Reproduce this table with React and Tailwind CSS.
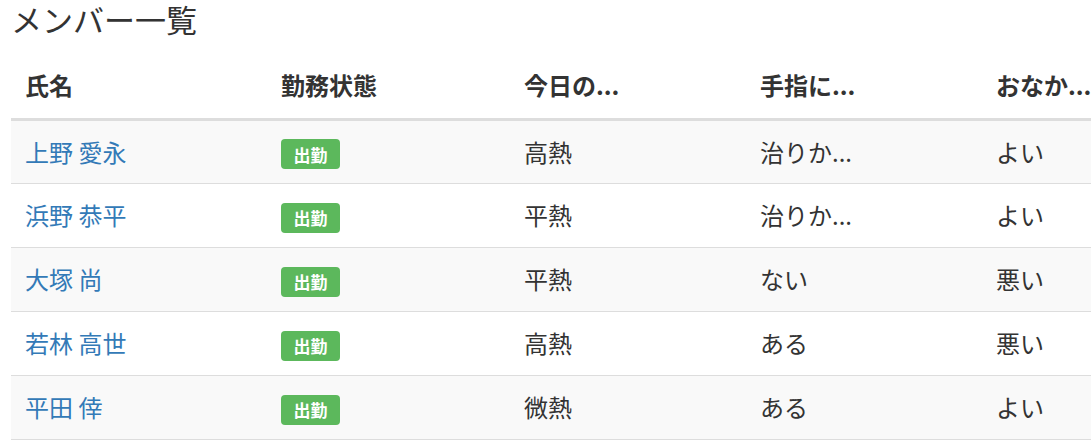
export default function App() {
  const rows = [
    { name: "上野 愛永", temp: "高熱", finger: "治りか...", stomach: "よい" },
    { name: "浜野 恭平", temp: "平熱", finger: "治りか...", stomach: "よい" },
    { name: "大塚 尚", temp: "平熱", finger: "ない", stomach: "悪い" },
    { name: "若林 高世", temp: "高熱", finger: "ある", stomach: "悪い" },
    { name: "平田 倖", temp: "微熱", finger: "ある", stomach: "よい" },
  ];
  const font = { fontFamily: '"Noto Sans CJK JP", "Noto Sans", sans-serif' };
  return (
    <div className="w-[1091px] h-[440px] overflow-hidden bg-white pl-[11px] text-[#333]" style={font}>
      <div className="h-[53px] text-[31px] leading-[38px] font-normal">メンバー一覧</div>
      <table className="table-fixed border-collapse w-[1236px] text-[24px]">
        <colgroup>
          <col className="w-[256px]" />
          <col className="w-[243px]" />
          <col className="w-[236px]" />
          <col className="w-[236px]" />
          <col className="w-[265px]" />
        </colgroup>
        <thead>
          <tr className="h-[66px] border-b-[3px] border-[#dddddd]">
            <th className="text-left font-bold pl-[14px] align-middle">氏名</th>
            <th className="text-left font-bold pl-[14px] align-middle">勤務状態</th>
            <th className="text-left font-bold pl-[14px] align-middle">今日の...</th>
            <th className="text-left font-bold pl-[14px] align-middle">手指に...</th>
            <th className="text-left font-bold pl-[14px] align-middle">おなか...</th>
          </tr>
        </thead>
        <tbody>
          {rows.map((r, i) => (
            <tr
              key={i}
              className={
                "h-[64px] border-b border-[#dddddd] " + (i % 2 === 0 ? "bg-[#f9f9f9]" : "bg-white")
              }
            >
              <td className="pl-[14px] align-middle text-[#337ab7]">{r.name}</td>
              <td className="pl-[14px] align-middle">
                <span className="inline-flex items-center justify-center w-[59px] h-[30px] mt-[4px] rounded-[4px] bg-[#5cb85c] text-white text-[17px] font-bold leading-none">
                  出勤
                </span>
              </td>
              <td className="pl-[14px] align-middle">{r.temp}</td>
              <td className="pl-[14px] align-middle">{r.finger}</td>
              <td className="pl-[14px] align-middle">{r.stomach}</td>
            </tr>
          ))}
        </tbody>
      </table>
    </div>
  );
}
